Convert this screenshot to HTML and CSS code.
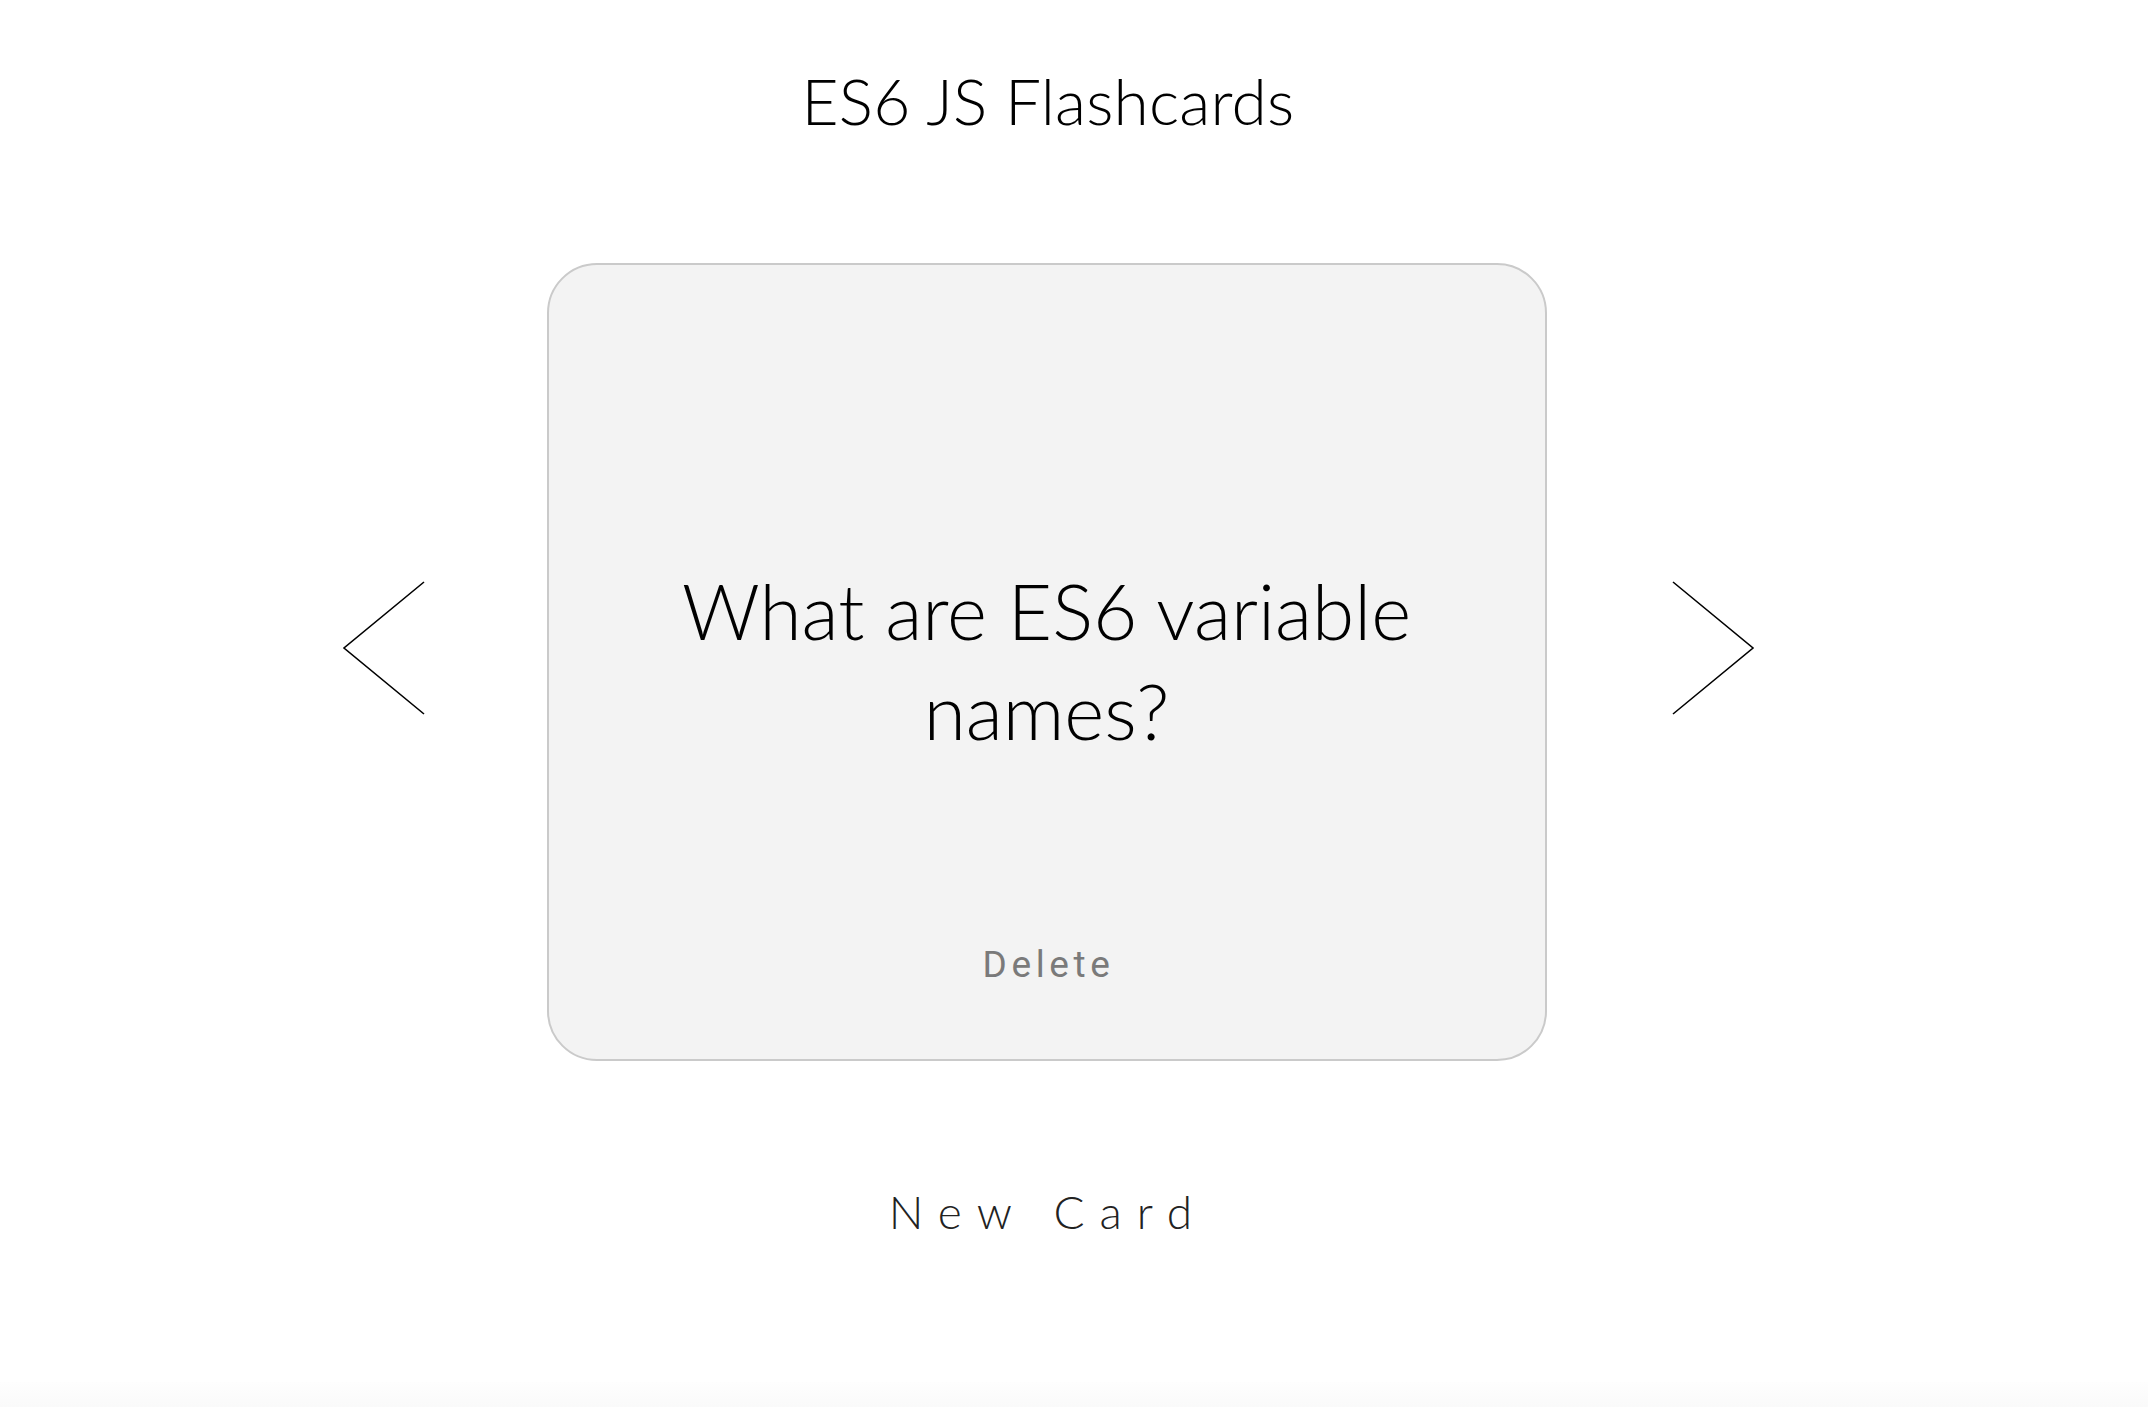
FILE: index.html
```html
<!DOCTYPE html>
<html lang="en">
<head>
<meta charset="utf-8">
<title>ES6 JS Flashcards</title>
<link rel="stylesheet" href="styles.css">
</head>
<body>
<div class="app">
  <h1 class="title">ES6 JS Flashcards</h1>
  <div class="deck">
    <button class="nav nav-prev" aria-label="Previous card">
      <svg width="80" height="132" viewBox="0 0 80 132"><polyline points="80,0 0,66 80,132" fill="none" stroke="#000" stroke-width="1.6"/></svg>
    </button>
    <div class="card">
      <div class="question">What are ES6 variable names?</div>
      <button class="delete">Delete</button>
    </div>
    <button class="nav nav-next" aria-label="Next card">
      <svg width="80" height="132" viewBox="0 0 80 132"><polyline points="0,0 80,66 0,132" fill="none" stroke="#000" stroke-width="1.6"/></svg>
    </button>
  </div>
  <button class="new-card">New Card</button>
</div>
<div class="footer"></div>
</body>
</html>
```
FILE: styles.css
```css
html, body {
  margin: 0;
  padding: 0;
  background: #fff;
}
body {
  min-height: 1407px;
  display: flex;
  flex-direction: column;
  font-family: "Lato", "Open Sans", sans-serif;
  color: #000;
}
.app {
  width: 2096px;
  display: flex;
  flex-direction: column;
  align-items: center;
}
.title {
  margin: 61px 0 0;
  font-size: 64px;
  line-height: 80px;
  font-weight: 300;
  letter-spacing: 0.2px;
}
.deck {
  margin-top: 122px;
  display: flex;
  align-items: flex-start;
}
.nav {
  border: 0;
  background: none;
  padding: 0;
  margin-top: 319px;
  width: 80px;
  height: 132px;
  cursor: pointer;
}
.nav svg { display: block; overflow: visible; }
.nav-prev { margin-right: 123px; }
.nav-next { margin-left: 126px; }
.card {
  box-sizing: border-box;
  width: 1000px;
  height: 798px;
  border: 2px solid #cacaca;
  border-radius: 50px;
  background: #f3f3f3;
  display: flex;
  flex-direction: column;
  align-items: center;
  padding: 110px 80px 74px;
}
.question {
  flex: 1;
  display: flex;
  align-items: center;
  justify-content: center;
  text-align: center;
  font-size: 76.5px;
  line-height: 100px;
  font-weight: 300;
  color: #000;
}
.delete {
  border: 0;
  background: none;
  padding: 0 0 0 4px;
  font-family: "Roboto", "Liberation Sans", sans-serif;
  font-weight: 400;
  font-size: 37px;
  line-height: 40px;
  letter-spacing: 4.6px;
  color: #7a7a7a;
  cursor: pointer;
}
.new-card {
  margin-top: 121px;
  border: 0;
  background: none;
  padding: 0;
  font-family: "Lato", "Open Sans", sans-serif;
  font-weight: 300;
  font-size: 46px;
  line-height: 60px;
  letter-spacing: 15px;
  color: #222;
  cursor: pointer;
}
.footer {
  margin-top: auto;
  height: 25px;
  background: linear-gradient(#fefefe, #fafafa);
}
```
